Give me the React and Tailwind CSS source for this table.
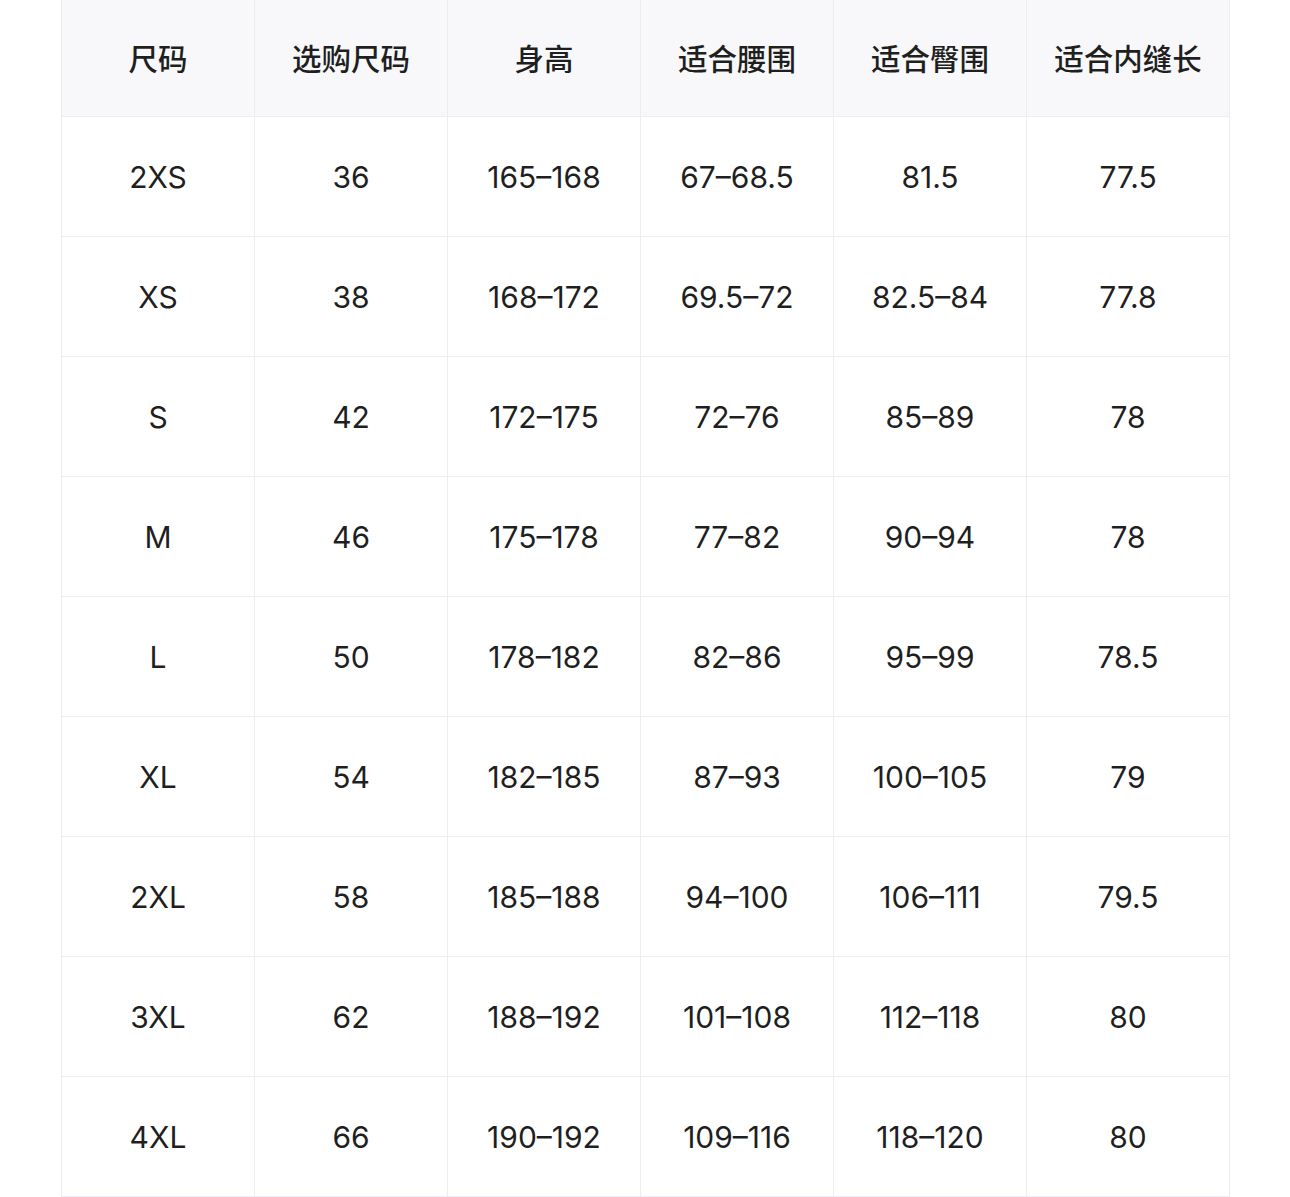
const headers = ['尺码', '选购尺码', '身高', '适合腰围', '适合臀围', '适合内缝长'];

const rows = [
  ['2XS', '36', '165–168', '67–68.5', '81.5', '77.5'],
  ['XS', '38', '168–172', '69.5–72', '82.5–84', '77.8'],
  ['S', '42', '172–175', '72–76', '85–89', '78'],
  ['M', '46', '175–178', '77–82', '90–94', '78'],
  ['L', '50', '178–182', '82–86', '95–99', '78.5'],
  ['XL', '54', '182–185', '87–93', '100–105', '79'],
  ['2XL', '58', '185–188', '94–100', '106–111', '79.5'],
  ['3XL', '62', '188–192', '101–108', '112–118', '80'],
  ['4XL', '66', '190–192', '109–116', '118–120', '80'],
];

export default function App() {
  return (
    <div className="min-h-screen bg-white" style={{ fontFamily: 'Inter, "Noto Sans CJK SC", sans-serif' }}>
      <div className="ml-[61px] w-[1169px] border-l border-[#ececf2] grid grid-cols-[193px_193px_193px_193px_193px_203px] text-[#1f1f1f]">
        {headers.map(h => (
          <div key={h} className="h-[117px] bg-[#f8f8fa] border-r border-b border-[#ececf2] flex items-center justify-center text-[29.5px] font-medium pt-[2px]">
            {h}
          </div>
        ))}
        {rows.map(row =>
          row.map((cell, i) => (
            <div key={row[0] + i} className="h-[120px] border-r border-b border-[#ececf2] flex items-center justify-center text-[30px] pt-[1px]">
              {cell}
            </div>
          ))
        )}
      </div>
    </div>
  );
}
